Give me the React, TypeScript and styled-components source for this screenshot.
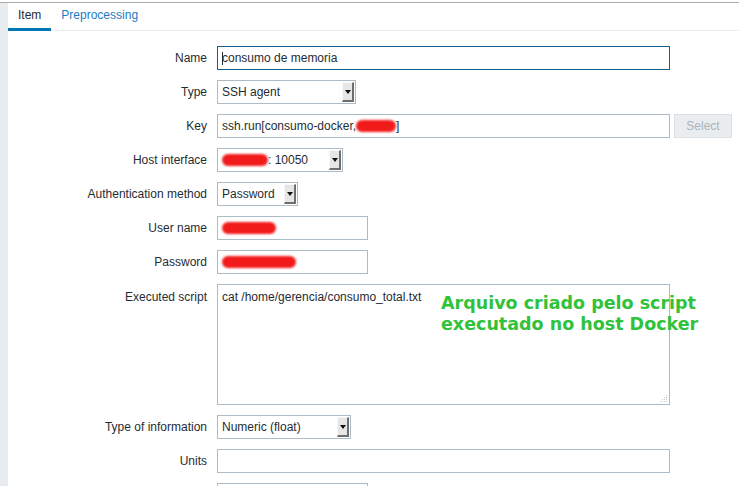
import styled, { createGlobalStyle } from "styled-components";

const GlobalStyle = createGlobalStyle`
  html, body {
    margin: 0;
    padding: 0;
    background: #ffffff;
    overflow: hidden;
  }
  body {
    font-family: "Liberation Sans", Arial, sans-serif;
    font-size: 12px;
    color: #1f2c33;
  }
`;

const Page = styled.div`
  position: relative;
  width: 739px;
  height: 486px;
  padding-top: 2px;
  box-sizing: border-box;
  overflow: hidden;
`;

const Frame = styled.div`
  display: flex;
  height: 100%;
  border-top: 1px solid #acacac;
`;

const Gutter = styled.div`
  width: 8px;
  flex-shrink: 0;
  background: #e8ecef;
`;

const Main = styled.div`
  flex: 1;
  background: #ffffff;
`;

const TabBar = styled.div`
  display: flex;
  height: 27px;
  border-bottom: 1px solid #ebeef0;
`;

const Tab = styled.div<{ $active?: boolean }>`
  display: flex;
  align-items: center;
  padding: 0 10px 2px;
  color: ${(p) => (p.$active ? "#1f2c33" : "#1a7dc4")};
  border-bottom: 3px solid ${(p) => (p.$active ? "#0275b8" : "transparent")};
  margin-bottom: -1px;
`;

const Form = styled.div`
  display: grid;
  grid-template-columns: 199px 1fr;
  column-gap: 10px;
  row-gap: 10px;
  padding-top: 15px;
`;

const Label = styled.div<{ $top?: boolean }>`
  display: flex;
  justify-content: flex-end;
  align-items: ${(p) => (p.$top ? "flex-start" : "center")};
  padding-top: ${(p) => (p.$top ? "6px" : "0")};
  height: ${(p) => (p.$top ? "auto" : "24px")};
`;

const Cell = styled.div`
  display: flex;
  align-items: center;
  gap: 4px;
`;

const Field = styled.div<{ $w: number; $focus?: boolean }>`
  display: flex;
  align-items: center;
  width: ${(p) => p.$w}px;
  height: 24px;
  box-sizing: border-box;
  padding: 0 4px;
  border: 1px solid ${(p) => (p.$focus ? "#115e8f" : "#acbbc5")};
  background: #ffffff;
  white-space: nowrap;
  overflow: hidden;
`;

const Caret = styled.span`
  display: inline-block;
  width: 1px;
  height: 13px;
  background: #1f2c33;
  margin-right: -1px;
`;

const TextArea = styled.div`
  position: relative;
  width: 453px;
  height: 121px;
  box-sizing: border-box;
  padding: 5px 4px;
  border: 1px solid #acbbc5;
`;

const Grip = styled.svg`
  position: absolute;
  right: 1px;
  bottom: 1px;
`;

const SelectBox = styled.div<{ $w: number }>`
  display: flex;
  width: ${(p) => p.$w}px;
  height: 24px;
  box-sizing: border-box;
  border: 1px solid #acbbc5;
  background: #ffffff;
`;

const SelectText = styled.div`
  flex: 1;
  display: flex;
  align-items: center;
  padding-left: 4px;
  white-space: nowrap;
  overflow: hidden;
`;

const SelectArrow = styled.div`
  width: 12px;
  margin: 1px 1px 1px 0;
  display: flex;
  align-items: center;
  justify-content: center;
  background: #e6e6e6;
  border-left: 1px solid #f8f8f8;
  border-top: 1px solid #f8f8f8;
  border-right: 2px solid #6e6e6e;
  border-bottom: 2px solid #6e6e6e;
  box-sizing: border-box;
`;

const Triangle = styled.span`
  width: 0;
  height: 0;
  border-left: 3px solid transparent;
  border-right: 3px solid transparent;
  border-top: 4px solid #111111;
  margin-left: 1px;
`;

const Button = styled.div`
  display: flex;
  align-items: center;
  justify-content: center;
  width: 58px;
  height: 24px;
  box-sizing: border-box;
  border: 1px solid #d9dfe3;
  background: #eaedef;
  color: #a9b4bb;
`;

const Blob = styled.span<{ $w: number }>`
  display: inline-block;
  width: ${(p) => p.$w}px;
  height: 12px;
  border-radius: 7px;
  background: #f21b1b;
  filter: blur(0.8px);
`;

const Note = styled.div`
  position: absolute;
  left: 441px;
  top: 293px;
  font-family: "DejaVu Sans", Verdana, sans-serif;
  font-weight: bold;
  font-size: 17.5px;
  line-height: 21px;
  color: #2fc23a;
  pointer-events: none;
`;

function Select({ w, children }: { w: number; children: React.ReactNode }) {
  return (
    <SelectBox $w={w}>
      <SelectText>{children}</SelectText>
      <SelectArrow>
        <Triangle />
      </SelectArrow>
    </SelectBox>
  );
}

export default function App() {
  return (
    <>
      <GlobalStyle />
      <Page>
        <Frame>
          <Gutter />
          <Main>
            <TabBar>
              <Tab $active>Item</Tab>
              <Tab>Preprocessing</Tab>
            </TabBar>
            <Form>
              <Label>Name</Label>
              <Cell>
                <Field $w={453} $focus>
                  <Caret />
                  consumo de memoria
                </Field>
              </Cell>

              <Label>Type</Label>
              <Cell>
                <Select w={139}>SSH agent</Select>
              </Cell>

              <Label>Key</Label>
              <Cell>
                <Field $w={453}>
                  ssh.run[consumo-docker,
                  <Blob $w={40} />
                  ]
                </Field>
                <Button>Select</Button>
              </Cell>

              <Label>Host interface</Label>
              <Cell>
                <Select w={126}>
                  <Blob $w={46} />
                  : 10050
                </Select>
              </Cell>

              <Label>Authentication method</Label>
              <Cell>
                <Select w={81}>Password</Select>
              </Cell>

              <Label>User name</Label>
              <Cell>
                <Field $w={151}>
                  <Blob $w={54} />
                </Field>
              </Cell>

              <Label>Password</Label>
              <Cell>
                <Field $w={151}>
                  <Blob $w={74} />
                </Field>
              </Cell>

              <Label $top>Executed script</Label>
              <Cell>
                <TextArea>
                  cat /home/gerencia/consumo_total.txt
                  <Grip width="8" height="8" viewBox="0 0 8 8">
                    <g fill="#c4ccd1">
                      <rect x="6" y="0" width="1" height="1" />
                      <rect x="4" y="2" width="1" height="1" />
                      <rect x="6" y="2" width="1" height="1" />
                      <rect x="2" y="4" width="1" height="1" />
                      <rect x="4" y="4" width="1" height="1" />
                      <rect x="6" y="4" width="1" height="1" />
                      <rect x="0" y="6" width="1" height="1" />
                      <rect x="2" y="6" width="1" height="1" />
                      <rect x="4" y="6" width="1" height="1" />
                      <rect x="6" y="6" width="1" height="1" />
                    </g>
                  </Grip>
                </TextArea>
              </Cell>

              <Label>Type of information</Label>
              <Cell>
                <Select w={134}>Numeric (float)</Select>
              </Cell>

              <Label>Units</Label>
              <Cell>
                <Field $w={453} />
              </Cell>

              <Label></Label>
              <Cell>
                <Field $w={151} />
              </Cell>
            </Form>
          </Main>
        </Frame>
        <Note>
          Arquivo criado pelo script
          <br />
          executado no host Docker
        </Note>
      </Page>
    </>
  );
}
